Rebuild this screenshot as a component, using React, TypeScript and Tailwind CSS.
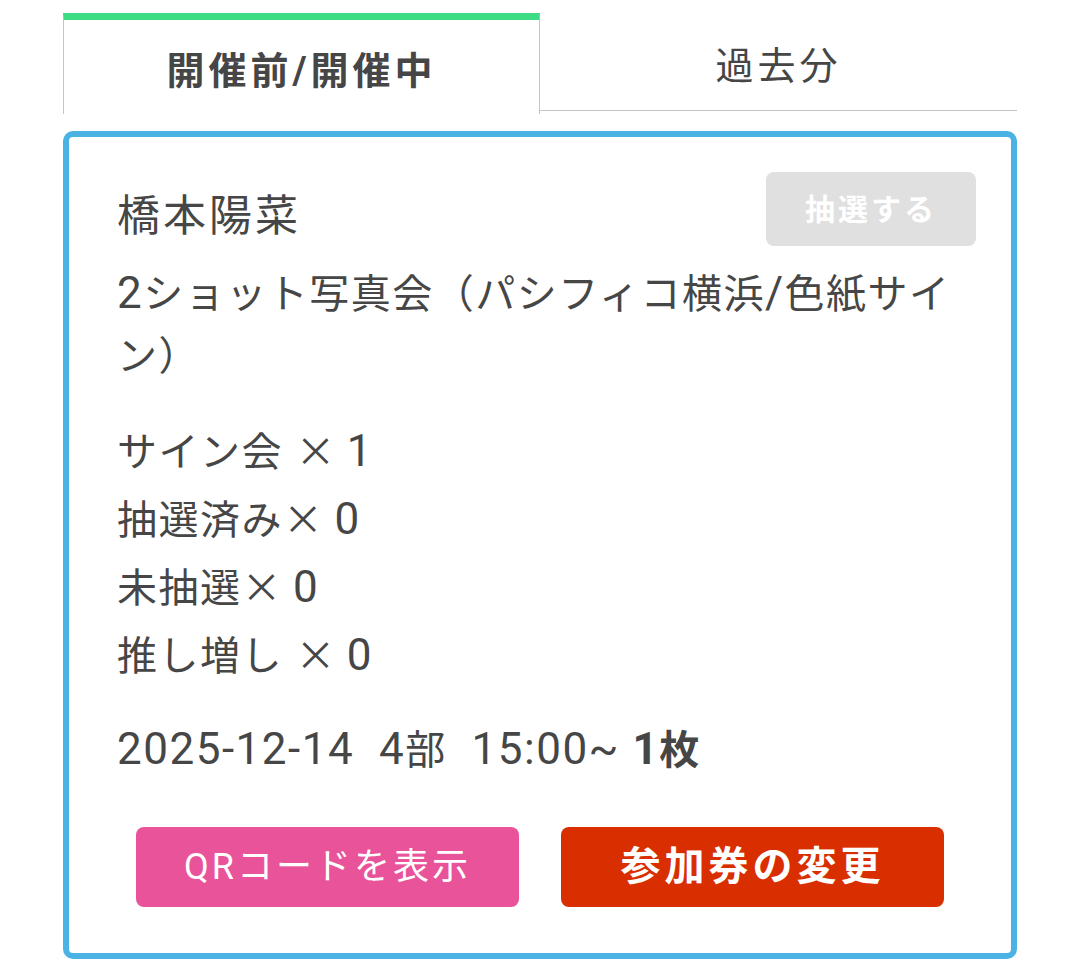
import type { ReactNode } from 'react';

const font = { fontFamily: 'Roboto, "Noto Sans CJK JP", sans-serif' };
const cjk = { fontFamily: '"Noto Sans CJK JP", sans-serif' };

// latin runs come out larger than the CJK text in the app
function L({ children }: { children: ReactNode }) {
  return <span className="text-[44px] leading-none">{children}</span>;
}

// full-width multiplication sign
function Times() {
  return (
    <span className="inline-block w-[39px] text-center leading-none tracking-normal" style={cjk}>
      ×
    </span>
  );
}

const counts = [
  { label: 'サイン会', count: '1', pad: true },
  { label: '抽選済み', count: '0', pad: false },
  { label: '未抽選', count: '0', pad: false },
  { label: '推し増し', count: '0', pad: true },
];

export default function App() {
  return (
    <div className="min-h-screen bg-white px-[63px] pt-[13px] text-[#464646]" style={font}>
      {/* tabs */}
      <div className="flex">
        <div className="flex h-[101px] w-[477px] items-center justify-center border-x border-t-[7px] border-x-[#c4c4c4] border-t-[#3ddc84] pt-[8px] text-[38px] font-bold tracking-[4px]">
          開催前/開催中
        </div>
        <div className="flex h-[98px] flex-1 items-center justify-center border-b border-[#c4c4c4] pt-[10px] text-[38px] tracking-[4px]">
          過去分
        </div>
      </div>

      {/* ticket card */}
      <div className="mt-[17px] rounded-[10px] border-[6px] border-[#4ab3e3] pb-[46px] pl-[48px] pr-[35px] pt-[35px]">
        <div className="flex items-start justify-between">
          <div className="mt-[14px] text-[43px] leading-[60px] tracking-[3px]">橋本陽菜</div>
          <button className="h-[74px] w-[210px] rounded-[8px] bg-[#e0e0e0] text-[30px] font-bold tracking-[3px] text-white">
            抽選する
          </button>
        </div>

        <p className="mt-[18px] pr-[14px] text-[40px] leading-[62px] tracking-[1.5px]">
          <L>2</L>ショット写真会（パシフィコ横浜<L>/</L>色紙サイン）
        </p>

        <div className="mt-[31px] text-[40px] leading-[68px] tracking-[1.5px]">
          {counts.map((c) => (
            <div key={c.label} className="whitespace-pre">
              {c.label}
              {c.pad && <L> </L>}
              <Times />
              <L> {c.count}</L>
            </div>
          ))}
        </div>

        <div className="mt-[26px] whitespace-pre text-[40px] leading-[68px] tracking-[1.5px]">
          <L>2025-12-14  4</L>部<L>  15:00~ </L>
          <span className="font-bold">
            <L>1</L>枚
          </span>
        </div>

        <div className="mt-[42px] flex justify-center gap-[42px] pr-[13px]">
          <button className="h-[80px] w-[383px] rounded-[8px] bg-[#e8539a] text-[36px] tracking-[3px] text-white">
            QRコードを表示
          </button>
          <button className="h-[80px] w-[383px] rounded-[8px] bg-[#d92e00] text-[40px] font-bold tracking-[4px] text-white">
            参加券の変更
          </button>
        </div>
      </div>
    </div>
  );
}
